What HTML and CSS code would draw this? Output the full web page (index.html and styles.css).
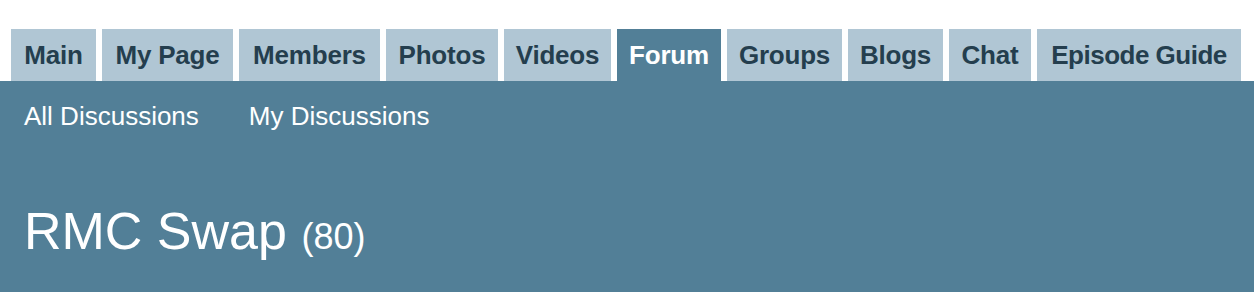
FILE: index.html
```html
<!DOCTYPE html>
<html lang="en">
<head>
<meta charset="utf-8">
<title>RMC Swap - Forum</title>
<link rel="stylesheet" href="styles.css">
</head>
<body>
  <nav class="tabs">
    <a class="tab t-main" href="#">Main</a>
    <a class="tab t-mypage" href="#">My Page</a>
    <a class="tab t-members" href="#">Members</a>
    <a class="tab t-photos" href="#">Photos</a>
    <a class="tab t-videos" href="#">Videos</a>
    <a class="tab t-forum active" href="#">Forum</a>
    <a class="tab t-groups" href="#">Groups</a>
    <a class="tab t-blogs" href="#">Blogs</a>
    <a class="tab t-chat" href="#">Chat</a>
    <a class="tab t-episode" href="#">Episode Guide</a>
  </nav>
  <section class="panel">
    <div class="subnav">
      <a href="#">All Discussions</a>
      <a href="#">My Discussions</a>
    </div>
    <h1 class="title">RMC Swap <span class="count">(80)</span></h1>
  </section>
</body>
</html>
```

FILE: styles.css
```css
html, body {
  margin: 0;
  padding: 0;
  background: #ffffff;
  height: 100%;
}
body {
  font-family: "Liberation Sans", Arial, Helvetica, sans-serif;
  display: flex;
  flex-direction: column;
}
.tabs {
  display: flex;
  gap: 6px;
  padding: 29px 0 0 11px;
}
.tab {
  display: flex;
  align-items: center;
  justify-content: center;
  height: 52px;
  box-sizing: border-box;
  background: #b0c6d4;
  color: #243e4e;
  font-weight: bold;
  font-size: 26px;
  text-decoration: none;
  letter-spacing: -0.2px;
  white-space: nowrap;
  padding-top: 1px;
}
.t-main { width: 85px; }
.t-mypage { width: 131px; }
.t-members { width: 141px; }
.t-photos { width: 112px; }
.t-videos { width: 107px; }
.t-forum { width: 104px; }
.t-groups { width: 115px; }
.t-blogs { width: 95px; }
.t-chat { width: 82px; }
.t-episode { width: 204px; letter-spacing: -0.5px; }
.tab.active {
  background: #527f97;
  color: #ffffff;
}
.panel {
  flex: 1;
  background: #527f97;
  padding: 0 24px;
}
.subnav {
  display: flex;
  gap: 50px;
  height: 70px;
  align-items: center;
}
.subnav a {
  color: #ffffff;
  text-decoration: none;
  font-size: 26px;
}
.title {
  margin: 50px 0 0;
  color: #ffffff;
  font-weight: normal;
  font-size: 52px;
  line-height: 60px;
}
.count {
  font-size: 36px;
}
```
